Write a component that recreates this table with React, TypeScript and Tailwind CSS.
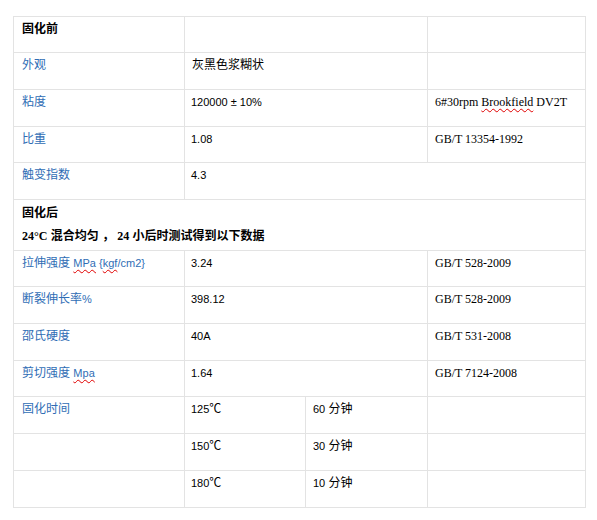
import React from "react";

const sans = { fontFamily: '"Liberation Sans", "Noto Sans CJK SC", sans-serif' };

function Cell({
  children,
  span = "",
  pad = "pl-[8px]",
}: {
  children?: React.ReactNode;
  span?: string;
  pad?: string;
}) {
  return (
    <div className={`bg-white pt-[3px] ${pad} ${span} text-[12px] leading-[18px] text-black whitespace-nowrap`}>
      {children}
    </div>
  );
}

const Label = ({ children }: { children: React.ReactNode }) => (
  <span className="text-[#2f6db5]">{children}</span>
);

const Num = ({ children }: { children: React.ReactNode }) => (
  <span className="text-[11px]">{children}</span>
);

const Serif = ({ children }: { children: React.ReactNode }) => (
  <span
    className="text-[12px]"
    style={{ fontFamily: '"Liberation Serif", "Noto Sans CJK SC", serif' }}
  >
    {children}
  </span>
);

const Squig = ({ children }: { children: React.ReactNode }) => (
  <span className="underline decoration-wavy decoration-[#e00000] decoration-1 underline-offset-[2px]">
    {children}
  </span>
);

export default function App() {
  return (
    <div className="w-[597px] h-[520px] bg-white" style={sans}>
      <div className="pt-[16px] pl-[13px]">
        <div className="grid w-[573px] grid-cols-[170px_120px_121px_157px] grid-rows-[35px_36px_36px_35px_36px_50px_35px_36px_36px_35px_36px_36px_36px] gap-px p-px bg-[#e3e3e3]">
          {/* row 1 */}
          <Cell>
            <span className="font-bold">固化前</span>
          </Cell>
          <Cell span="col-span-2" />
          <Cell />

          {/* row 2 */}
          <Cell>
            <Label>外观</Label>
          </Cell>
          <Cell span="col-span-2" pad="pl-[7px]">
            灰黑色浆糊状
          </Cell>
          <Cell />

          {/* row 3 */}
          <Cell>
            <Label>粘度</Label>
          </Cell>
          <Cell span="col-span-2" pad="pl-[6px]">
            <Num>120000 ± 10%</Num>
          </Cell>
          <Cell pad="pl-[7px]">
            <Serif>
              6#30rpm <Squig>Brookfield</Squig> DV2T
            </Serif>
          </Cell>

          {/* row 4 */}
          <Cell>
            <Label>比重</Label>
          </Cell>
          <Cell span="col-span-2" pad="pl-[6px]">
            <Num>1.08</Num>
          </Cell>
          <Cell pad="pl-[7px]">
            <Serif>GB/T 13354-1992</Serif>
          </Cell>

          {/* row 5 */}
          <Cell>
            <Label>触变指数</Label>
          </Cell>
          <Cell span="col-span-3" pad="pl-[6px]">
            <Num>4.3</Num>
          </Cell>

          {/* row 6 */}
          <div className="col-span-4 bg-white pl-[8px] pt-[4px] text-[12px] leading-[18px] text-black whitespace-nowrap">
            <div className="font-bold">固化后</div>
            <div className="mt-[5px] font-bold">
              <Serif>24°C</Serif> 混合均匀 ，<Serif> 24</Serif> 小后时测试得到以下数据
            </div>
          </div>

          {/* row 7 */}
          <Cell>
            <Label>
              拉伸强度{" "}
              <span className="text-[11px]">
                <Squig>MPa</Squig> {"{"}
                <Squig>kgf</Squig>/cm2{"}"}
              </span>
            </Label>
          </Cell>
          <Cell span="col-span-2" pad="pl-[6px]">
            <Num>3.24</Num>
          </Cell>
          <Cell pad="pl-[7px]">
            <Serif>GB/T 528-2009</Serif>
          </Cell>

          {/* row 8 */}
          <Cell>
            <Label>
              断裂伸长率<span className="text-[11px]">%</span>
            </Label>
          </Cell>
          <Cell span="col-span-2" pad="pl-[6px]">
            <Num>398.12</Num>
          </Cell>
          <Cell pad="pl-[7px]">
            <Serif>GB/T 528-2009</Serif>
          </Cell>

          {/* row 9 */}
          <Cell>
            <Label>邵氏硬度</Label>
          </Cell>
          <Cell span="col-span-2" pad="pl-[6px]">
            <Num>40A</Num>
          </Cell>
          <Cell pad="pl-[7px]">
            <Serif>GB/T 531-2008</Serif>
          </Cell>

          {/* row 10 */}
          <Cell>
            <Label>
              剪切强度{" "}
              <span className="text-[11px]">
                <Squig>Mpa</Squig>
              </span>
            </Label>
          </Cell>
          <Cell span="col-span-2" pad="pl-[6px]">
            <Num>1.64</Num>
          </Cell>
          <Cell pad="pl-[7px]">
            <Serif>GB/T 7124-2008</Serif>
          </Cell>

          {/* row 11 */}
          <Cell>
            <Label>固化时间</Label>
          </Cell>
          <Cell pad="pl-[6px]">
            <Num>125</Num>℃
          </Cell>
          <Cell pad="pl-[7px]">
            <Num>60</Num> 分钟
          </Cell>
          <Cell />

          {/* row 12 */}
          <Cell />
          <Cell pad="pl-[6px]">
            <Num>150</Num>℃
          </Cell>
          <Cell pad="pl-[7px]">
            <Num>30</Num> 分钟
          </Cell>
          <Cell />

          {/* row 13 */}
          <Cell />
          <Cell pad="pl-[6px]">
            <Num>180</Num>℃
          </Cell>
          <Cell pad="pl-[7px]">
            <Num>10</Num> 分钟
          </Cell>
          <Cell />
        </div>
      </div>
    </div>
  );
}
